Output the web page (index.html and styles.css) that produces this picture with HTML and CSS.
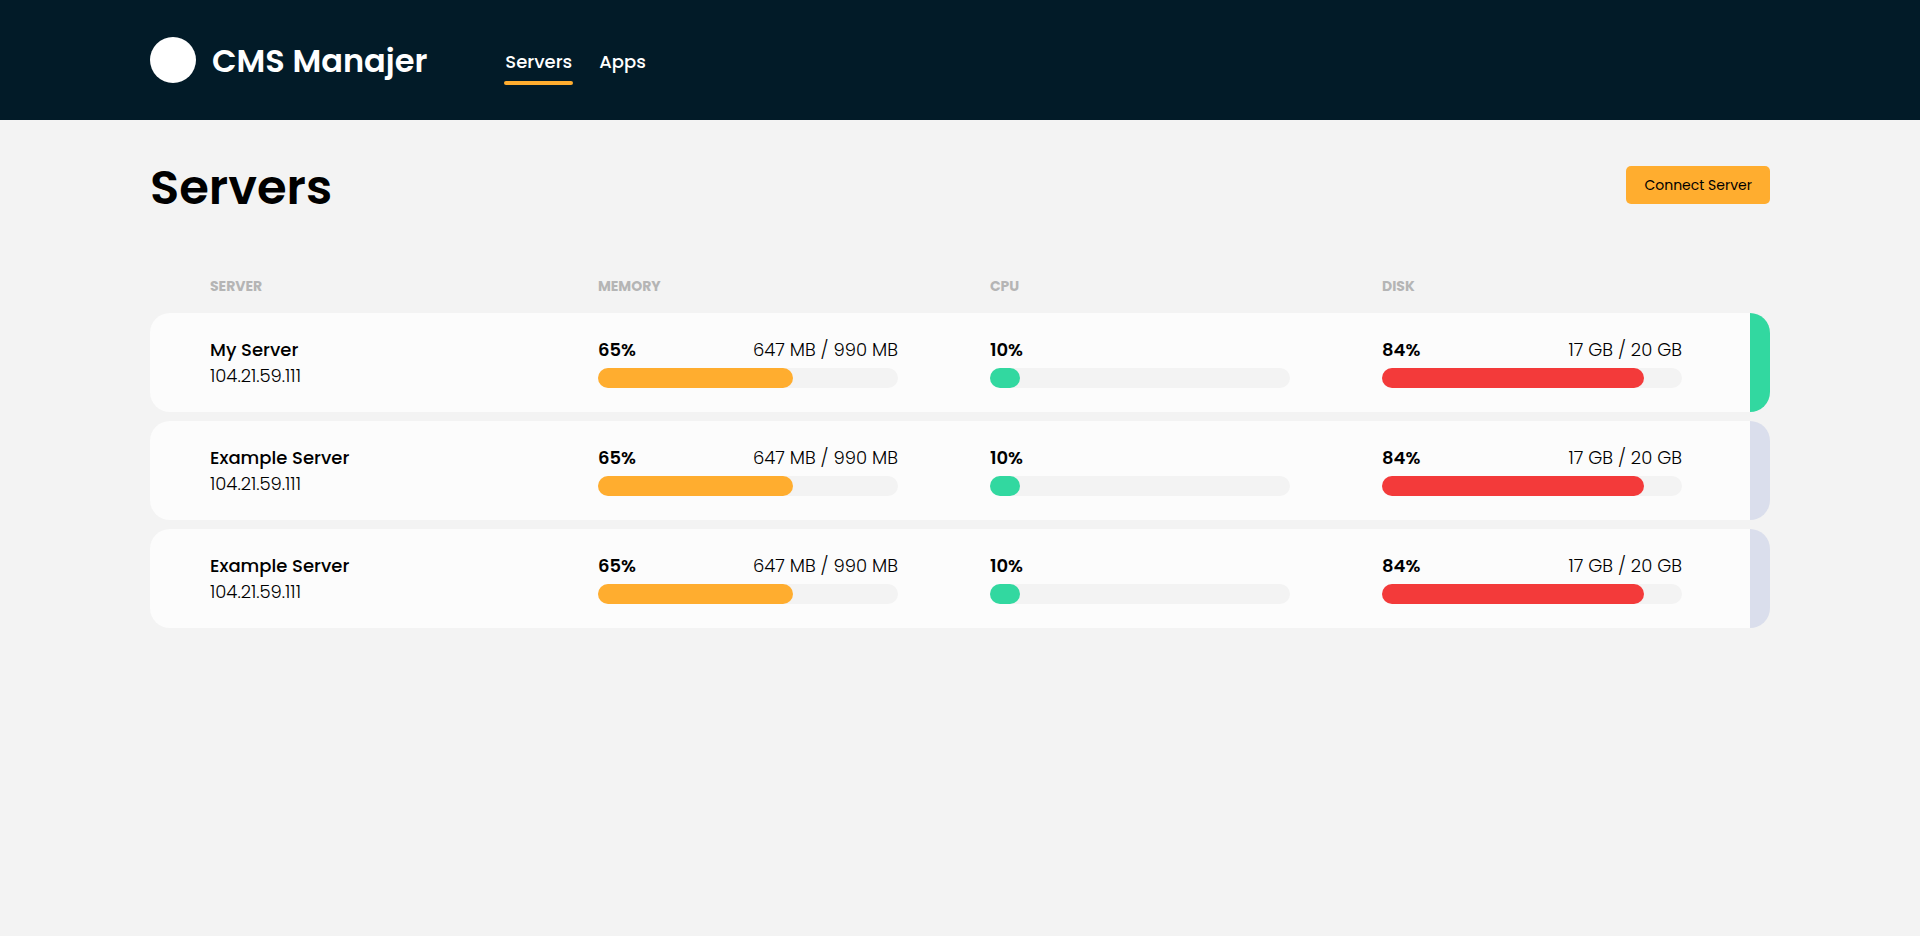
FILE: index.html
```html
<!DOCTYPE html>
<html lang="en">
<head>
  <meta charset="utf-8">
  <meta name="viewport" content="width=device-width, initial-scale=1">
  <title>CMS Manajer</title>
  <link rel="stylesheet" href="styles.css">
</head>
<body>
  <header class="header">
    <div class="container header-inner">
      <div class="brand">
        <span class="brand-logo"></span>
        <span class="brand-name">CMS Manajer</span>
      </div>
      <nav class="nav">
        <a class="nav-link active" href="#servers">Servers</a>
        <a class="nav-link" href="#apps">Apps</a>
      </nav>
    </div>
  </header>

  <main class="container">
    <div class="page-head">
      <h1 class="page-title">Servers</h1>
      <button class="button" type="button">Connect Server</button>
    </div>

    <table class="servers">
      <colgroup>
        <col class="col-server">
        <col class="col-usage">
        <col class="col-usage">
        <col>
        <col class="col-status">
      </colgroup>
      <thead>
        <tr><th>SERVER</th><th>MEMORY</th><th>CPU</th><th>DISK</th><td></td></tr>
      </thead>
      <tbody>
        <tr>
          <td><div class="server-name">My Server</div><div class="server-ip">104.21.59.111</div></td>
          <td><div class="usage"><div class="usage-text"><b>65%</b><span>647 MB / 990 MB</span></div><div class="bar"><div class="fill warning" style="width:65%"></div></div></div></td>
          <td><div class="usage"><div class="usage-text"><b>10%</b></div><div class="bar"><div class="fill good" style="width:10%"></div></div></div></td>
          <td><div class="usage"><div class="usage-text"><b>84%</b><span>17 GB / 20 GB</span></div><div class="bar"><div class="fill danger" style="width:87.4%"></div></div></div></td>
          <td class="status online"></td>
        </tr>
        <tr>
          <td><div class="server-name">Example Server</div><div class="server-ip">104.21.59.111</div></td>
          <td><div class="usage"><div class="usage-text"><b>65%</b><span>647 MB / 990 MB</span></div><div class="bar"><div class="fill warning" style="width:65%"></div></div></div></td>
          <td><div class="usage"><div class="usage-text"><b>10%</b></div><div class="bar"><div class="fill good" style="width:10%"></div></div></div></td>
          <td><div class="usage"><div class="usage-text"><b>84%</b><span>17 GB / 20 GB</span></div><div class="bar"><div class="fill danger" style="width:87.4%"></div></div></div></td>
          <td class="status"></td>
        </tr>
        <tr>
          <td><div class="server-name">Example Server</div><div class="server-ip">104.21.59.111</div></td>
          <td><div class="usage"><div class="usage-text"><b>65%</b><span>647 MB / 990 MB</span></div><div class="bar"><div class="fill warning" style="width:65%"></div></div></div></td>
          <td><div class="usage"><div class="usage-text"><b>10%</b></div><div class="bar"><div class="fill good" style="width:10%"></div></div></div></td>
          <td><div class="usage"><div class="usage-text"><b>84%</b><span>17 GB / 20 GB</span></div><div class="bar"><div class="fill danger" style="width:87.4%"></div></div></div></td>
          <td class="status"></td>
        </tr>
      </tbody>
    </table>
  </main>
</body>
</html>
```
FILE: styles.css
```css
* {
  box-sizing: border-box;
}

body {
  margin: 0;
  background: #f3f3f3;
  color: #000;
  font-family: Poppins, Inter, "Liberation Sans", sans-serif;
  font-size: 18px;
  line-height: 26px;
}

.container {
  max-width: 1920px;
  margin: 0 auto;
  padding: 0 150px;
}

.header {
  background: #021b28;
  color: #fff;
}

.header-inner {
  display: flex;
  align-items: center;
  gap: 78px;
  min-height: 120px;
}

.brand {
  display: flex;
  align-items: center;
  gap: 16px;
}

.brand-logo {
  width: 46px;
  height: 46px;
  border-radius: 50%;
  background: #fff;
}

.brand-name {
  padding-top: 2px;
  font-size: 32px;
  font-weight: 600;
  line-height: 48px;
}

.nav {
  display: flex;
  gap: 27px;
  padding-top: 14px;
}

.nav-link {
  display: flex;
  flex-direction: column;
  gap: 6px;
  color: #fff;
  font-weight: 500;
  text-decoration: none;
}

.nav-link::after {
  content: "";
  height: 4px;
  margin: 0 -1px;
  border-radius: 2px;
}

.nav-link.active::after {
  background: #ffad2f;
}

.page-head {
  display: flex;
  align-items: flex-start;
  justify-content: space-between;
  padding: 32px 0 28px;
}

.page-title {
  margin: 0;
  font-size: 48px;
  font-weight: 600;
  line-height: 72px;
}

.button {
  height: 38px;
  margin-top: 14px;
  padding: 0 18px;
  border: 0;
  border-radius: 5px;
  background: #ffad2f;
  color: #000;
  font: inherit;
  font-size: 14px;
}

.servers {
  width: 100%;
  border-spacing: 0 9px;
  table-layout: fixed;
}

.col-server {
  width: 27.65%;
}

.col-usage {
  width: 24.2%;
}

.col-status {
  width: 20px;
}

th,
td {
  padding: 0;
  text-align: left;
  vertical-align: top;
}

th:first-child,
td:first-child {
  padding-left: 60px;
}

th {
  height: 43px;
  padding-top: 6px;
  color: #b5b5b5;
  font-size: 14px;
  font-weight: 700;
  vertical-align: middle;
}

tbody td {
  padding: 24px 0 23px;
  background: #fcfcfc;
}

tbody td:first-child {
  border-radius: 20px 0 0 20px;
}

tbody .status {
  border-radius: 0 20px 20px 0;
  background: #dadeec;
}

tbody .online {
  background: #32d8a0;
}

.server-name {
  font-weight: 500;
}

.server-ip {
  font-weight: 300;
}

.usage {
  max-width: 300px;
}

.usage-text {
  display: flex;
  justify-content: space-between;
  margin-bottom: 5px;
  font-weight: 300;
}

.usage-text b {
  font-weight: 600;
}

.bar {
  height: 20px;
  border-radius: 10px;
  background: #f3f3f3;
}

.fill {
  height: 100%;
  border-radius: 10px;
}

.warning {
  background: #ffad2f;
}

.good {
  background: #32d8a0;
}

.danger {
  background: #f33a3a;
}
```
